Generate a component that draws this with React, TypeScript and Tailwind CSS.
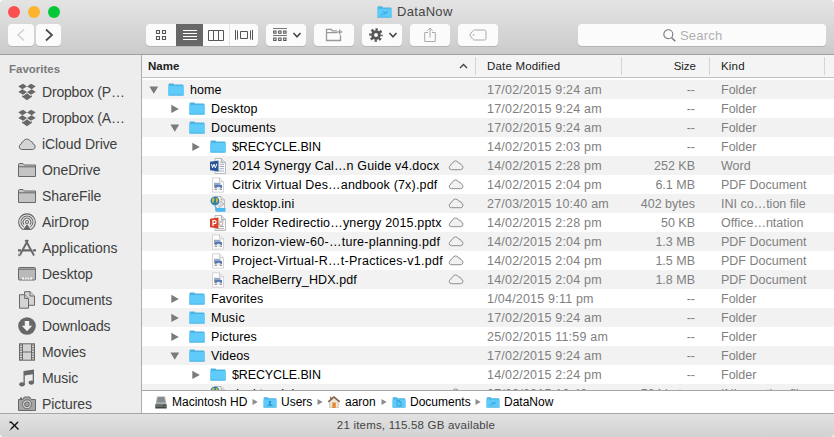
import type { ReactNode } from "react";

type Kind = "folder" | "word" | "pdf" | "ini" | "ppt";
type Row = {
  name: string;
  level: 0 | 1 | 2;
  icon: Kind;
  open?: boolean;
  cloud?: boolean;
  date: string;
  size: string;
  kind: string;
  track?: string;
};

const rows: Row[] = [
  { name: "home", level: 0, icon: "folder", open: true, date: "17/02/2015 9:24 am", size: "--", kind: "Folder" },
  { name: "Desktop", level: 1, icon: "folder", open: false, date: "17/02/2015 9:24 am", size: "--", kind: "Folder" },
  { name: "Documents", level: 1, icon: "folder", open: true, date: "17/02/2015 9:24 am", size: "--", kind: "Folder", track: "tracking-[0.2px]" },
  { name: "$RECYCLE.BIN", level: 2, icon: "folder", open: false, date: "14/02/2015 2:03 pm", size: "--", kind: "Folder", track: "tracking-[-0.12px]" },
  { name: "2014 Synergy Cal…n Guide v4.docx", level: 2, icon: "word", cloud: true, date: "14/02/2015 2:28 pm", size: "252 KB", kind: "Word", track: "tracking-[0.16px]" },
  { name: "Citrix Virtual Des…andbook (7x).pdf", level: 2, icon: "pdf", cloud: true, date: "14/02/2015 2:04 pm", size: "6.1 MB", kind: "PDF Document", track: "tracking-[0.18px]" },
  { name: "desktop.ini", level: 2, icon: "ini", cloud: true, date: "27/03/2015 10:40 am", size: "402 bytes", kind: "INI co…tion file", track: "tracking-[0.25px]" },
  { name: "Folder Redirectio…ynergy 2015.pptx", level: 2, icon: "ppt", cloud: true, date: "14/02/2015 2:28 pm", size: "50 KB", kind: "Office…ntation", track: "tracking-[0.18px]" },
  { name: "horizon-view-60-…ture-planning.pdf", level: 2, icon: "pdf", cloud: true, date: "14/02/2015 2:04 pm", size: "1.3 MB", kind: "PDF Document", track: "tracking-[0.28px]" },
  { name: "Project-Virtual-R…t-Practices-v1.pdf", level: 2, icon: "pdf", cloud: true, date: "14/02/2015 2:04 pm", size: "1.5 MB", kind: "PDF Document", track: "tracking-[0.27px]" },
  { name: "RachelBerry_HDX.pdf", level: 2, icon: "pdf", cloud: true, date: "14/02/2015 2:04 pm", size: "1.8 MB", kind: "PDF Document" },
  { name: "Favorites", level: 1, icon: "folder", open: false, date: "1/04/2015 9:11 pm", size: "--", kind: "Folder" },
  { name: "Music", level: 1, icon: "folder", open: false, date: "17/02/2015 9:24 am", size: "--", kind: "Folder", track: "tracking-[0.25px]" },
  { name: "Pictures", level: 1, icon: "folder", open: false, date: "25/02/2015 11:59 am", size: "--", kind: "Folder" },
  { name: "Videos", level: 1, icon: "folder", open: true, date: "17/02/2015 9:24 am", size: "--", kind: "Folder" },
  { name: "$RECYCLE.BIN", level: 2, icon: "folder", open: false, date: "14/02/2015 2:24 pm", size: "--", kind: "Folder", track: "tracking-[-0.12px]" },
  { name: "desktop.ini", level: 2, icon: "ini", cloud: true, date: "27/03/2015 10:40 am", size: "504 bytes", kind: "INI co…tion file", track: "tracking-[0.25px]" },
];

const indent = ["pl-[5px]", "pl-[26px]", "pl-[47px]"];

function Folder({ className = "w-4 h-[13px]", glyph }: { className?: string; glyph?: ReactNode }) {
  return (
    <svg viewBox="0 0 16 13" className={`shrink-0 ${className}`}>
      <path d="M.5 1.2Q.5.4 1.3.4H5.3L6.5 1.6H14.7Q15.5 1.6 15.5 2.4V12.2H.5Z" fill="#4db4e2" />
      <path d="M.3 3H15.7V11.8Q15.7 12.4 15 12.4H1Q.3 12.4.3 11.8Z" fill="#5fcbfb" />
      <path d="M.5 12.1H15.5" stroke="#46aede" strokeWidth=".7" />
      {glyph}
    </svg>
  );
}

const synergyGlyph = <path d="M4 10L7.5 7.5H11.5M6.5 5.5L9 8L7 9.5M9 8L11.5 5" stroke="#2f9fdc" strokeWidth=".8" fill="none" />;
const personGlyph = <path d="M8 4.5a1.5 1.5 0 0 1 .7 2.8V8.4L11 9.4V10.2H5V9.4L7.3 8.4V7.3A1.5 1.5 0 0 1 8 4.5" fill="#2893cc" />;
const pageGlyph = <path d="M5.7 4.2H8.5L10.5 6.2V10.5H5.7ZM8.3 4.3V6.4H10.4" fill="none" stroke="#2893cc" strokeWidth=".8" />;

function FileIcon({ kind }: { kind: Kind }) {
  if (kind === "folder") return <Folder />;
  if (kind === "pdf")
    return (
      <svg viewBox="0 0 16 16" className="size-4 shrink-0">
        <path d="M2.5.8H9.5L13.5 4.8V15.2H2.5Z" fill="#fdfdfd" stroke="#cbcbcb" strokeWidth=".8" />
        <path d="M9.5.8V4.8H13.5" fill="#ececec" stroke="#bcbcbc" strokeWidth=".7" />
        <path d="M4 5.8H10.5V10H4Z" fill="#94a9cb" />
        <path d="M4 8.7L6 7.7L8 8.5L10.5 7.7V10.5H4Z" fill="#a99078" />
        <path d="M5.2 8H12V11.3H5.2Z" fill="#5478b4" />
        <path d="M6 11Q8.5 8.4 11 11V12H6Z" fill="#e3e7ee" />
        <path d="M4.5 12.3H7M9.5 12.3H12" stroke="#777" strokeWidth=".9" />
      </svg>
    );
  if (kind === "ini")
    return (
      <svg viewBox="0 0 16 16" className="size-4 shrink-0">
        <path d="M5.5.5H11L14.5 4V15H5.5Z" fill="#f3f3f3" stroke="#aaa" strokeWidth=".8" />
        <path d="M11 .5V4H14.5" fill="#ddd" stroke="#aaa" strokeWidth=".7" />
        <path d="M5.5 9L11 5L14 8L9 12" stroke="#b5b5b5" fill="#d7dadd" />
        <circle cx="4.9" cy="4.8" r="4.4" fill="#2f7fa9" />
        <path d="M2.7 1.7Q4.8 1.2 4.5 4L3.2 7.5Q1.6 6 1.8 3.8ZM6 1.7L8.2 3.2L7.6 6L6 7Z" fill="#c9b94a" />
        <path d="M4 8L6.3 11H6.8V12H15.5V15.7H6.3Z" fill="#48b9ef" />
      </svg>
    );
  const word = kind === "word";
  return (
    <svg viewBox="0 0 16 16" className="size-4 shrink-0">
      <path d="M5 .5H11.5L15.5 4.5V15.5H5Z" fill="#fbfbfb" stroke="#aaa" strokeWidth=".8" />
      <path d="M11.5 .5V4.5H15.5" fill="#ddd" stroke="#999" strokeWidth=".7" />
      {word ? (
        <path d="M9.5 4H11M9.5 6.3H14M9.5 8.5H14M9.5 10.7H14M6 13H14" stroke="#8d98ab" strokeWidth=".8" />
      ) : (
        <g fill="none" stroke="#a0a0a0" strokeWidth=".9">
          <path d="M9.5 6H14M9.5 11.5H14M6 13.7H14" />
          <circle cx="11" cy="8.7" r="1.8" />
        </g>
      )}
      <path d="M0 3.8L8.5 2.5V13.5L0 12.2Z" fill={word ? "#2a5699" : "#d7402b"} />
      {word ? (
        <path d="M1.5 6L2.6 9.8L4 6.2L5.4 9.8L6.8 5.8" fill="none" stroke="#fff" strokeWidth="1" />
      ) : (
        <path d="M3 11V5.5H4.5Q6.1 5.5 6.1 7.1T4.5 8.7H3" fill="none" stroke="#fff" strokeWidth="1.2" />
      )}
    </svg>
  );
}

function Cloud() {
  return (
    <svg viewBox="0 0 16 11" className="w-4 h-[11px] shrink-0">
      <path
        d="M3.3 9.7H12.8A2.4 2.4 0 0 0 13.2 5A2.3 2.3 0 0 0 10.6 3.1A3.2 3.2 0 0 0 4.5 3.3A2.2 2.2 0 0 0 2.8 5.3A2.25 2.25 0 0 0 3.3 9.7Z"
        fill="#f1f1f1"
        stroke="#858585"
        strokeWidth=".9"
      />
    </svg>
  );
}

function Disclosure({ open }: { open?: boolean }) {
  return (
    <svg viewBox="0 0 14 10" className="w-3.5 h-2.5 shrink-0">
      {open === undefined ? null : open ? (
        <path d="M2.4 1.5H11.2L6.8 8.8Z" fill="#7b7b7b" />
      ) : (
        <path d="M3.3 .8V9L10.8 4.9Z" fill="#7b7b7b" />
      )}
    </svg>
  );
}

function ListRow({ row, striped }: { row: Row; striped: boolean }) {
  return (
    <div className={`flex h-[19px] shrink-0 items-center text-[12.5px] leading-[18px] whitespace-nowrap ${striped ? "bg-[#f2f2f2]" : "bg-white"}`}>
      <div className={`flex w-[333px] shrink-0 items-center pr-[11px] ${indent[row.level]}`}>
        <Disclosure open={row.open} />
        <div className="mr-1.5 ml-[7px] flex">
          <FileIcon kind={row.icon} />
        </div>
        <span className={`pt-px text-black ${row.track ?? "tracking-[0.1px]"}`}>{row.name}</span>
        {row.cloud && (
          <span className="ml-auto flex">
            <Cloud />
          </span>
        )}
      </div>
      <div className="w-[146px] shrink-0 pt-px pl-3 tracking-[0.2px] text-[#7f7f7f]">{row.date}</div>
      <div className="w-[74px] shrink-0 pt-px text-right text-[#7f7f7f]">{row.size}</div>
      <div className="ml-[26px] shrink-0 pt-px text-[#7f7f7f]">{row.kind}</div>
    </div>
  );
}

const g = "#686868";
const sidebarFolder = (
  <g stroke={g} fill="#c4c4c4">
    <path d="M.5 15.5V3.5Q.5 2.5 1.5 2.5H5L6.5 4H17.5V15.5Z" />
    <path d="M.5 5.8H17.5" />
  </g>
);
const dropbox = (
  <g fill={g}>
    <path d="M5 .8L9 3.5L4.3 6.3L.3 3.3ZM13 .8L17.7 3.3L13.7 6.3L9 3.5ZM.3 9.1L4.3 6.3L9 9.1L5.2 11.8ZM17.7 9.1L13.7 6.3L9 9.1L12.8 11.8ZM4 12.3L5.3 13.1L9 10.3L12.7 13.1L14 12.3V13.8L9 17.2L4 13.8Z" />
  </g>
);

const sidebar: [string, ReactNode, string?][] = [
  ["Dropbox (P…", dropbox, "tracking-[-0.18px]"],
  ["Dropbox (A…", dropbox, "tracking-[-0.18px]"],
  [
    "iCloud Drive",
    <path d="M3.7 14.5H14.6A2.9 2.9 0 0 0 15 8.8A2.8 2.8 0 0 0 12.5 6.3A4 4 0 0 0 5.2 6.6A2.7 2.7 0 0 0 3.1 9.1A2.8 2.8 0 0 0 3.7 14.5Z" fill="#d4d4d4" stroke={g} />,
  ],
  ["OneDrive", sidebarFolder],
  ["ShareFile", sidebarFolder],
  [
    "AirDrop",
    <g fill="none" stroke={g} strokeWidth="1.1">
      <path d="M5 16.4A8.3 8.3 0 1 1 13 16.4" />
      <path d="M5.7 14A6 6 0 1 1 12.3 14" />
      <path d="M6.2 11.6A3.8 3.8 0 1 1 11.8 11.6" />
      <circle cx="9" cy="9" r="1.5" />
      <path d="M9 11L4.8 17H13.2Z" fill={g} stroke="none" />
    </g>,
  ],
  [
    "Applications",
    <g stroke={g} fill="none">
      <path d="M10 1L2.2 15.5M7.5 1L16 16.5" strokeWidth="1.9" />
      <path d="M5 11.3H13M0 11.3H3.2M14.8 11.3H18" strokeWidth="2.2" />
      <path d="M1 14.5L.8 17L3.3 15.5" />
    </g>,
    "tracking-normal",
  ],
  [
    "Desktop",
    <g>
      <rect x=".5" y="2.5" width="17" height="12.5" rx="1" fill="#b9b9b9" stroke={g} />
      <path d="M1 4.2H17" stroke={g} />
      <path d="M4 12.5H14.2V14.5H4Z" fill="#f7f7f7" />
      <path d="M6.5 12V14.5M9 12V14.5M11.5 12V14.5" stroke="#999" strokeWidth=".7" />
    </g>,
  ],
  [
    "Documents",
    <g stroke={g} fill="#d4d4d4">
      <path d="M6.5.7H12L16.5 5V14.3H6.5Z" />
      <path d="M12 .7V5H16.5" />
      <path d="M1.5 3.7H7L10.5 7.5V17.2H1.5Z" />
      <path d="M6.7 3.7V7.5H10.5" />
    </g>,
  ],
  [
    "Downloads",
    <g>
      <circle cx="9" cy="9" r="8.8" fill={g} />
      <path d="M6.8 4H11.2V8.7H14.2L9 14.2L3.8 8.7H6.8Z" fill="#f2f2f2" />
    </g>,
  ],
  [
    "Movies",
    <g>
      <rect x="1.5" y=".8" width="15" height="16.4" fill="#d4d4d4" stroke={g} />
      <path d="M4.5 1V17M13.5 1V17M4.5 9H13.5" stroke={g} />
      <path d="M3 1.5V17M15 1.5V17" stroke={g} strokeWidth="1.4" strokeDasharray="1.3 1.2" />
    </g>,
  ],
  [
    "Music",
    <g fill={g}>
      <path d="M5.5 2L16 .5V14H14.7V5.3L6.8 6.6V15.8H5.5Z" />
      <ellipse cx="4" cy="15.3" rx="2.8" ry="2.1" />
      <ellipse cx="13.3" cy="13.6" rx="2.7" ry="2.1" />
    </g>,
  ],
  [
    "Pictures",
    <g>
      <path d="M.5 4.5H4.8L6.3 2H11.7L13.2 4.5H17.5V15.5H.5Z" fill="#a5a5a5" stroke={g} />
      <path d="M2 3.3H4.2" stroke={g} strokeWidth="1.5" />
      <circle cx="9" cy="9.3" r="4.5" fill="#d6d6d6" stroke={g} />
      <circle cx="9" cy="9.3" r="2.4" fill="#a2a2a2" stroke={g} />
    </g>,
  ],
];

const button = "flex h-[22px] shrink-0 items-center rounded-[4px] bg-[#fbfbfb] shadow-[0_1px_0_#b5b5b5]";

function Chevron() {
  return (
    <svg viewBox="0 0 10 8" className="h-2 w-2.5">
      <path d="M1.5 2L5 5.8L8.5 2" fill="none" stroke="#444" strokeWidth="1.5" />
    </svg>
  );
}

function Toolbar() {
  return (
    <div className="flex h-[31px] items-start px-2 pt-px">
      <div className={`${button} w-[26px] justify-center`}>
        <svg viewBox="0 0 10 14" className="h-3.5 w-2.5">
          <path d="M8 1.5L2 7L8 12.5" fill="none" stroke="#cfcfcf" strokeWidth="1.4" />
        </svg>
      </div>
      <div className={`${button} ml-0.5 w-[25px] justify-center`}>
        <svg viewBox="0 0 10 14" className="h-3.5 w-2.5">
          <path d="M2 1.5L8 7L2 12.5" fill="none" stroke="#4a4a4a" strokeWidth="1.7" />
        </svg>
      </div>
      <div className={`${button} ml-[85px] w-28 overflow-hidden`}>
        <div className="flex h-full w-[30px] items-center justify-center">
          <svg viewBox="0 0 12 12" className="size-3">
            <path d="M1.5 1.5H4.5V4.5H1.5ZM7.5 1.5H10.5V4.5H7.5ZM1.5 7.5H4.5V10.5H1.5ZM7.5 7.5H10.5V10.5H7.5Z" fill="none" stroke="#555" strokeWidth="1.1" />
          </svg>
        </div>
        <div className="flex h-full w-[27px] items-center justify-center bg-[#676767]">
          <svg viewBox="0 0 14 12" className="h-3 w-3.5">
            <path d="M0 1.5H14M0 4.5H14M0 7.5H14M0 10.5H14" stroke="#fff" />
          </svg>
        </div>
        <div className="flex h-full w-[27px] items-center justify-center border-r border-[#e4e4e4]">
          <svg viewBox="0 0 16 11" className="h-[11px] w-4">
            <path d="M.5.5H15.5V10.5H.5ZM5.5.5V10.5M10.5.5V10.5" fill="none" stroke="#555" />
          </svg>
        </div>
        <div className="flex h-full w-7 items-center justify-center">
          <svg viewBox="0 0 18 12" className="h-3 w-[18px]">
            <path d="M.5 1V11M2.5 1.5V10.5M15.5 1.5V10.5M17.5 1V11M5.5 2.5H12.5V9.5H5.5Z" fill="none" stroke="#555" />
          </svg>
        </div>
      </div>
      <div className={`${button} ml-2 w-10 gap-[5px] pl-[7px]`}>
        <svg viewBox="0 0 14 14" className="size-3.5">
          <path d="M0 .5H14M0 7.5H14" stroke="#777" />
          <path d="M.7 3H3V5.3H.7ZM5.7 3H8V5.3H5.7ZM10.7 3H13V5.3H10.7ZM.7 10H3V12.5H.7ZM5.7 10H8V12.5H5.7ZM10.7 10H13V12.5H10.7Z" fill="none" stroke="#555" strokeWidth="1.1" />
        </svg>
        <Chevron />
      </div>
      <div className={`${button} ml-2 w-10 justify-center`}>
        <svg viewBox="0 0 18 14" className="h-3.5 w-[18px]">
          <path d="M12 2.8H7.2L6.3 1.3H1.5V12.5H15.5V7.2M1.5 4.7H12M14.7 1.5V6.5M12.2 4H17.2" fill="none" stroke="#999" strokeWidth="1.3" />
        </svg>
      </div>
      <div className={`${button} ml-2 w-10 gap-[5px] pl-[7px]`}>
        <svg viewBox="0 0 14 14" className="size-3.5">
          <circle cx="7" cy="7" r="3.4" fill="none" stroke="#555" strokeWidth="2.8" />
          <circle cx="7" cy="7" r="5.6" fill="none" stroke="#555" strokeWidth="2.5" strokeDasharray="2.3 2.098" strokeDashoffset="1.15" />
        </svg>
        <Chevron />
      </div>
      <div className={`${button} ml-2 w-10 justify-center`}>
        <svg viewBox="0 0 12 16" className="h-4 w-3">
          <path d="M4 5.5H.7V14.5H11.3V5.5H8M6 10.5V1.2M3.3 3.8L6 1.1L8.7 3.8" fill="none" stroke="#aaa" />
        </svg>
      </div>
      <div className={`${button} ml-2 w-10 justify-center`}>
        <svg viewBox="0 0 18 12" className="h-3 w-[18px]">
          <path d="M5.5 1H15.5Q17 1 17 2.5V9.5Q17 11 15.5 11H5.5Q4.5 11 3.7 10L1.3 7Q.7 6 1.3 5L3.7 2Q4.5 1 5.5 1Z" fill="none" stroke="#aaa" />
          <circle cx="4.5" cy="6" r=".8" fill="#aaa" />
        </svg>
      </div>
      <div className={`${button} ml-20 w-[248px] pl-[85px] text-[13px] text-[#b0b0b0]`}>
        <svg viewBox="0 0 13 13" className="mr-1 size-[13px]">
          <circle cx="5.3" cy="5.3" r="4.5" fill="none" stroke="#777" strokeWidth="1.1" />
          <path d="M8.5 8.5L12.3 12.3" stroke="#777" strokeWidth="1.4" />
        </svg>
        <span className="pt-px tracking-[0.2px]">Search</span>
      </div>
    </div>
  );
}

function Crumb({ icon, label, width }: { icon: ReactNode; label: string; width: string }) {
  return (
    <div className={`flex shrink-0 items-center ${width}`}>
      {icon}
      {label}
    </div>
  );
}

function Separator() {
  return (
    <svg viewBox="0 0 6 6" className="mr-[5px] size-1.5 shrink-0">
      <path d="M.5 0V6L5.7 3Z" fill="#8c8c8c" />
    </svg>
  );
}

export default function App() {
  return (
    <div className="flex h-[437px] w-[834px] flex-col overflow-hidden rounded-[4px] bg-[#ececec] font-['Liberation_Sans',Arial,sans-serif]">
      <header className="h-[55px] shrink-0 border-b border-[#a0a0a0] bg-linear-to-b from-[#e4e4e4] to-[#cbcbcb]">
        <div className="flex h-[23px] items-center">
          <div className="flex w-[370px] shrink-0 gap-2 pl-2">
            <span className="size-3 rounded-full bg-[#fc5050]" />
            <span className="size-3 rounded-full bg-[#fdb42d]" />
            <span className="size-3 rounded-full bg-[#05c839]" />
          </div>
          <div className="flex items-center pl-[7px] text-[13px] text-[#454545]">
            <Folder className="mr-[5px] h-3 w-[15px]" glyph={synergyGlyph} />
            <span className="tracking-[0.3px]">DataNow</span>
          </div>
        </div>
        <Toolbar />
      </header>

      <div className="flex h-[359px] shrink-0 border-b border-[#a6a6a6]">
        <aside className="flex w-[142px] shrink-0 flex-col overflow-hidden border-r border-[#adadad] bg-[#ededed]">
          <div className="h-6 shrink-0 pt-1 pl-[9px] text-[11.5px] leading-5 font-bold text-[#7a7a7a]">Favorites</div>
          {sidebar.map(([label, icon, track]) => (
            <div key={label} className="flex h-[26px] shrink-0 items-center pl-[18px] text-[14px] whitespace-nowrap text-[#404040]">
              <svg viewBox="0 0 18 18" className="mr-1.5 size-[18px] shrink-0">
                {icon}
              </svg>
              <span className={track ?? "tracking-[-0.08px]"}>{label}</span>
            </div>
          ))}
        </aside>

        <main className="flex min-w-0 flex-1 flex-col bg-white">
          <div className="flex h-[23px] shrink-0 items-center border-b border-[#c2c2c2] bg-[#f4f4f4] text-[11.5px] text-[#222]">
            <div className="flex h-[18px] w-[334px] shrink-0 items-center justify-between border-r border-[#d4d4d4] pr-[7px] pl-1.5">
              <span className="pt-px font-bold">Name</span>
              <svg viewBox="0 0 9 6" className="h-1.5 w-[9px]">
                <path d="M1 5L4.5 1.5L8 5" fill="none" stroke="#444" strokeWidth="1.4" />
              </svg>
            </div>
            <div className="flex h-[18px] w-[146px] shrink-0 items-center border-r border-[#d4d4d4] pt-px pl-[11px] tracking-[0.18px]">Date Modified</div>
            <div className="flex h-[18px] w-[88px] shrink-0 items-center justify-end border-r border-[#d4d4d4] pt-px pr-[13px]">Size</div>
            <div className="flex h-[18px] w-[115px] shrink-0 items-center border-r border-[#d4d4d4] pt-px pl-[11px] tracking-[0.18px]">Kind</div>
          </div>
          <div className="flex h-[312px] shrink-0 flex-col overflow-hidden pt-0.5">
            {rows.map((row, i) => (
              <ListRow key={i} row={row} striped={i % 2 === 0} />
            ))}
          </div>
          <div className="flex h-[23px] shrink-0 items-center border-t border-[#a6a6a6] pl-[13px] text-[12px] whitespace-nowrap text-black">
            <Crumb
              width="w-[97px]"
              label="Macintosh HD"
              icon={
                <svg viewBox="0 0 12 13" className="mr-[5px] h-[13px] w-3">
                  <path d="M2 .5H10L11.5 9H.5Z" fill="#a5aaab" />
                  <path d="M3 1H9L10 6H2Z" fill="#858d90" />
                  <path d="M.3 8.5H11.7V12.5H.3Z" fill="#414647" />
                  <path d="M1 10H8" stroke="#88908b" />
                  <circle cx="10" cy="10.5" r=".6" fill="#b5ce9d" />
                </svg>
              }
            />
            <Separator />
            <Crumb width="w-[54px]" label="Users" icon={<Folder className="mr-1 h-[11px] w-3.5" glyph={personGlyph} />} />
            <Separator />
            <Crumb
              width="w-[53px]"
              label="aaron"
              icon={
                <svg viewBox="0 0 12 12" className="mr-[5px] size-3">
                  <path d="M1.8 5L6 1.5L10.2 5V12H1.8Z" fill="#eee6d9" stroke="#b7a48c" strokeWidth=".6" />
                  <path d="M2 .8H3.5V3H2Z" fill="#a66b4d" />
                  <path d="M.3 5.8L6 1L11.7 5.8" fill="none" stroke="#80624f" strokeWidth="1.6" />
                  <path d="M4.3 6.5H7.8V12H4.3Z" fill="#e68b35" />
                </svg>
              }
            />
            <Separator />
            <Crumb width="w-[83px]" label="Documents" icon={<Folder className="mr-1 h-[11px] w-3.5" glyph={pageGlyph} />} />
            <Separator />
            <Crumb width="w-[70px]" label="DataNow" icon={<Folder className="mr-1 h-[11px] w-3.5" glyph={synergyGlyph} />} />
          </div>
        </main>
      </div>

      <footer className="grid h-[23px] shrink-0 grid-cols-[100px_1fr_102px] items-center bg-linear-to-b from-[#e2e2e2] to-[#d2d2d2] text-[11.5px] text-[#444]">
        <svg viewBox="0 0 10 10" className="ml-[9px] size-2.5">
          <path d="M0 10L2.5 6.5L8 1L9.5 .3L9 2L3.5 7.5Z" fill="#111" />
          <path d="M.5 1.5L2 1L9.5 8.5" fill="none" stroke="#111" strokeWidth="1.4" />
        </svg>
        <span className="text-center tracking-[0.2px]">21 items, 115.58 GB available</span>
      </footer>
    </div>
  );
}
